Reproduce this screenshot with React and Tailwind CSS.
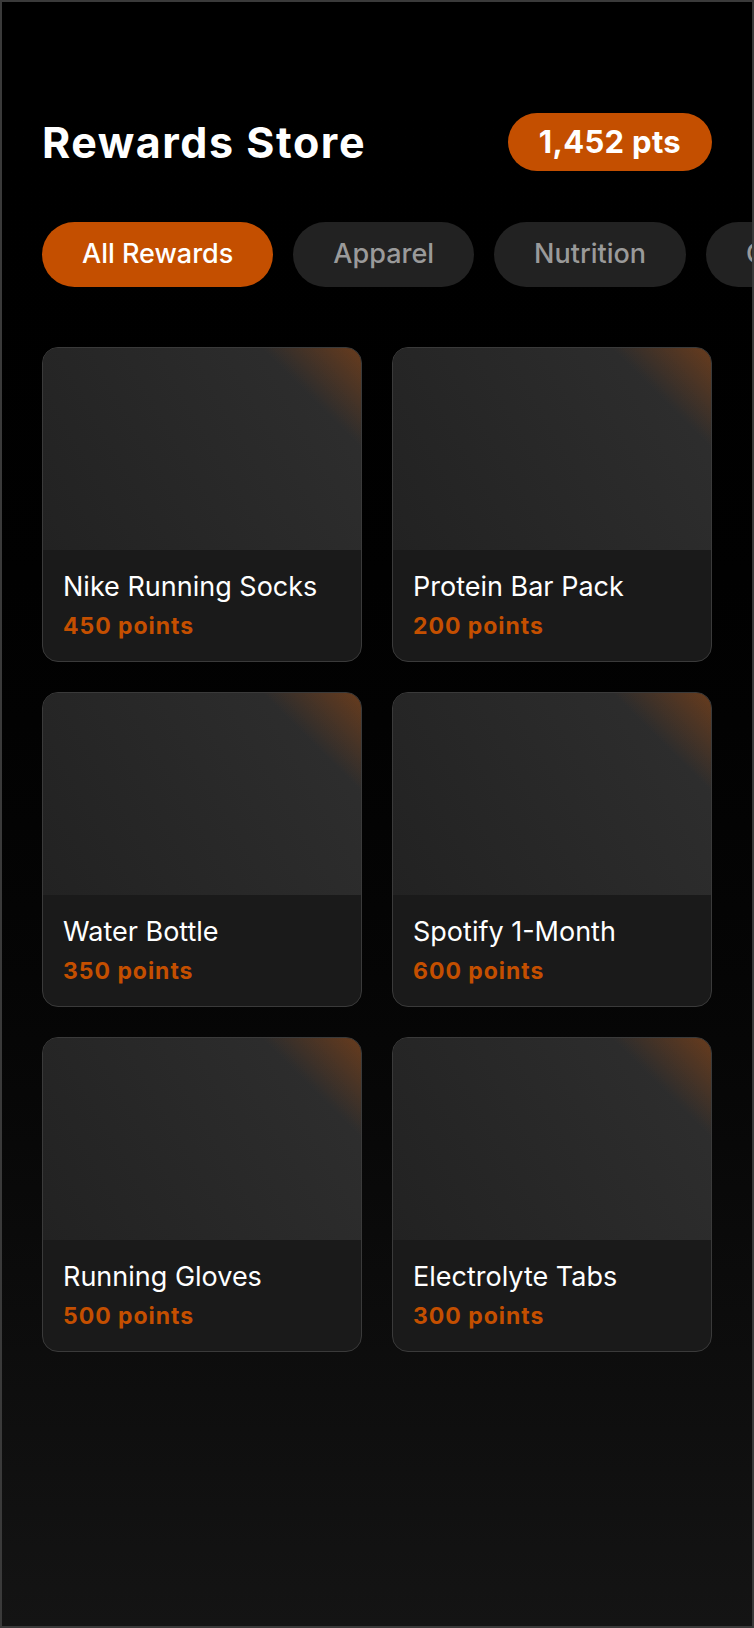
import React from "react";

const tabs = [
  { label: "All Rewards", active: true },
  { label: "Apparel" },
  { label: "Nutrition" },
  { label: "Gear" },
];

const rewards = [
  { name: "Nike Running Socks", points: 450 },
  { name: "Protein Bar Pack", points: 200 },
  { name: "Water Bottle", points: 350 },
  { name: "Spotify 1-Month", points: 600 },
  { name: "Running Gloves", points: 500 },
  { name: "Electrolyte Tabs", points: 300 },
];

function RewardCard({ name, points }) {
  return (
    <div className="rounded-2xl border-[1.5px] border-[#3a3a3a] overflow-hidden bg-[#1a1a1a]">
      <div className="h-[202px] bg-[linear-gradient(225deg,rgba(196,80,0,0.38)_0%,rgba(196,80,0,0)_19%),linear-gradient(60deg,#222222_0%,#2f2f2f_100%)]" />
      <div className="px-5 pt-[20px] pb-[21px]">
        <div className="text-[27px] leading-[33px] text-white font-normal">{name}</div>
        <div className="mt-[9px] text-[23px] leading-[28px] font-bold text-[#c44f00] tracking-[0.042em]">
          {points} points
        </div>
      </div>
    </div>
  );
}

export default function App() {
  return (
    <div
      className="w-[754px] h-[1628px] box-border border-2 border-[#3a3a3a] overflow-hidden bg-gradient-to-b from-black to-[#141414] px-10"
      style={{ fontFamily: "Inter, 'Noto Sans', sans-serif" }}
    >
      <div className="pt-[111px] flex items-center justify-between">
        <h1 className="text-[43px] leading-[48px] font-bold text-white tracking-[0.036em]">Rewards Store</h1>
        <div className="h-[58px] px-[31px] rounded-full bg-[#c44f00] flex items-center text-white text-[31px] font-bold tracking-[0.01em]">
          1,452 pts
        </div>
      </div>

      <div className="mt-[51px] -mr-10 flex gap-5 overflow-hidden">
        {tabs.map((t) => (
          <div
            key={t.label}
            className={
              t.active
                ? "shrink-0 whitespace-nowrap h-[65px] px-[40px] rounded-full flex items-center text-[27px] font-medium bg-[#c44f00] text-white"
                : "shrink-0 whitespace-nowrap h-[65px] px-[40px] rounded-full flex items-center text-[27px] font-medium bg-[#222222] text-[#9a9a9a]"
            }
          >
            {t.label}
          </div>
        ))}
      </div>

      <div className="mt-[60px] grid grid-cols-2 gap-[30px]">
        {rewards.map((r) => (
          <RewardCard key={r.name} name={r.name} points={r.points} />
        ))}
      </div>
    </div>
  );
}
